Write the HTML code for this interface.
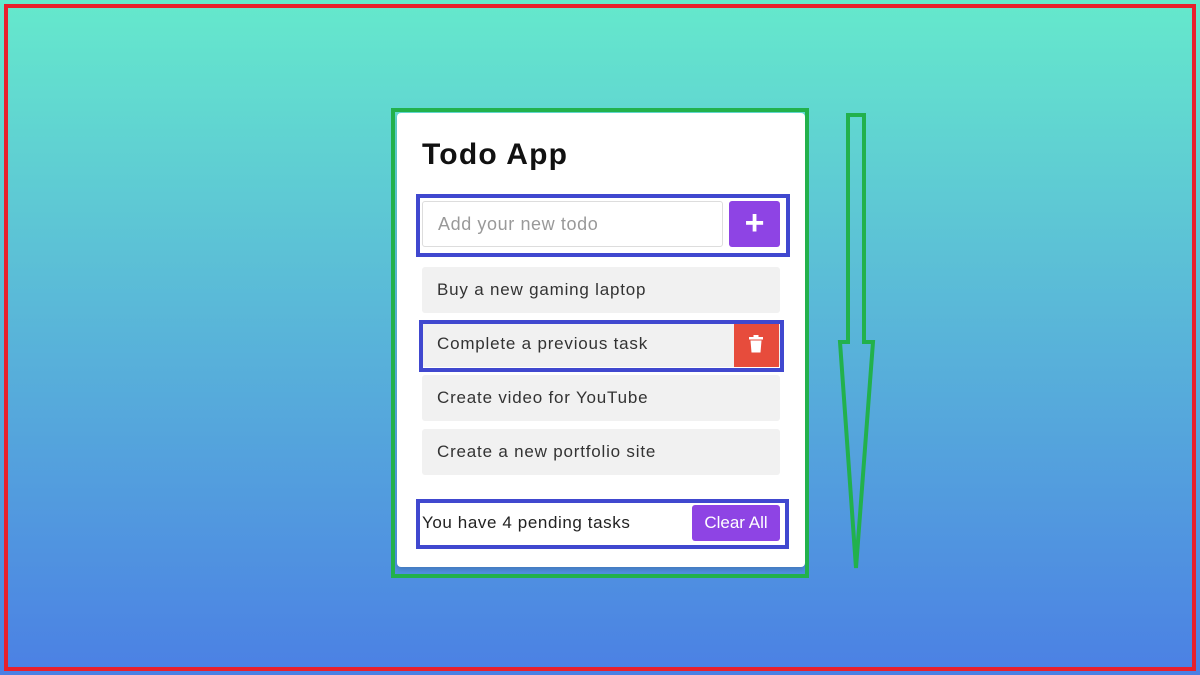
<!DOCTYPE html>
<html><head><style>
body{margin:0;width:1200px;height:675px;overflow:hidden;position:relative;font-family:"Liberation Sans",sans-serif;background:linear-gradient(180deg,#65e9cc 0%,#5ab9d8 45%,#4b80e4 100%);}
.abs{position:absolute;box-sizing:border-box}
.card{left:397px;top:113px;width:408px;height:454px;background:#fff;border-radius:4px;box-shadow:0 3px 4px rgba(0,0,0,.15)}
.blue{border:4px solid #4048cf}
.item{left:422px;width:358px;height:46px;background:#f1f1f1;border-radius:3px;font-size:17px;color:#333;line-height:46px;padding-left:15px;letter-spacing:0.8px}
</style></head><body>
<div class="abs" style="left:4px;top:4px;width:1192px;height:667px;border:4px solid #e8202c"></div>
<div class="abs card"></div>
<div class="abs" style="left:391px;top:108px;width:418px;height:470px;border:4px solid #22b14c"></div>
<div class="abs" style="left:422px;top:138px;font-size:30px;font-weight:bold;color:#111;letter-spacing:1.2px">Todo App</div>
<div class="abs" style="left:422px;top:201px;width:301px;height:46px;border:1px solid #ddd;border-radius:3px;font-size:18px;color:#999;line-height:44px;padding-left:15px;letter-spacing:0.6px">Add your new todo</div>
<div class="abs" style="left:729px;top:201px;width:51px;height:46px;background:#8e44e4;border-radius:3px;color:#fff;font-size:34px;font-weight:bold;text-align:center;line-height:44px">+</div>
<div class="abs blue" style="left:416px;top:194px;width:374px;height:63px"></div>
<div class="abs item" style="top:267px">Buy a new gaming laptop</div>
<div class="abs item" style="top:321px">Complete a previous task</div>
<div class="abs" style="left:734px;top:324px;width:45px;height:43px;background:#e74c3c"></div>
<svg class="abs" style="left:748px;top:335px" width="16" height="18" viewBox="0 0 16 18"><rect x="1" y="2" width="14" height="2.5" fill="#fff"/><rect x="5.5" y="0" width="5" height="3" fill="#fff"/><path d="M2.5 5.5h11l-1 12h-9z" fill="#fff"/></svg>
<div class="abs blue" style="left:419px;top:320px;width:365px;height:52px"></div>
<div class="abs item" style="top:375px">Create video for YouTube</div>
<div class="abs item" style="top:429px">Create a new portfolio site</div>
<div class="abs" style="left:422px;top:513px;font-size:17px;color:#222;letter-spacing:0.6px">You have 4 pending tasks</div>
<div class="abs" style="left:692px;top:505px;width:88px;height:36px;background:#8e44e4;border-radius:3px;color:#fff;font-size:17px;text-align:center;line-height:36px">Clear All</div>
<div class="abs blue" style="left:416px;top:499px;width:373px;height:50px"></div>
<svg class="abs" style="left:0;top:0" width="1200" height="675"><path d="M848 115h16v227h9l-17 226-16-226h8z" fill="none" stroke="#22b14c" stroke-width="4"/></svg>
</body></html>
